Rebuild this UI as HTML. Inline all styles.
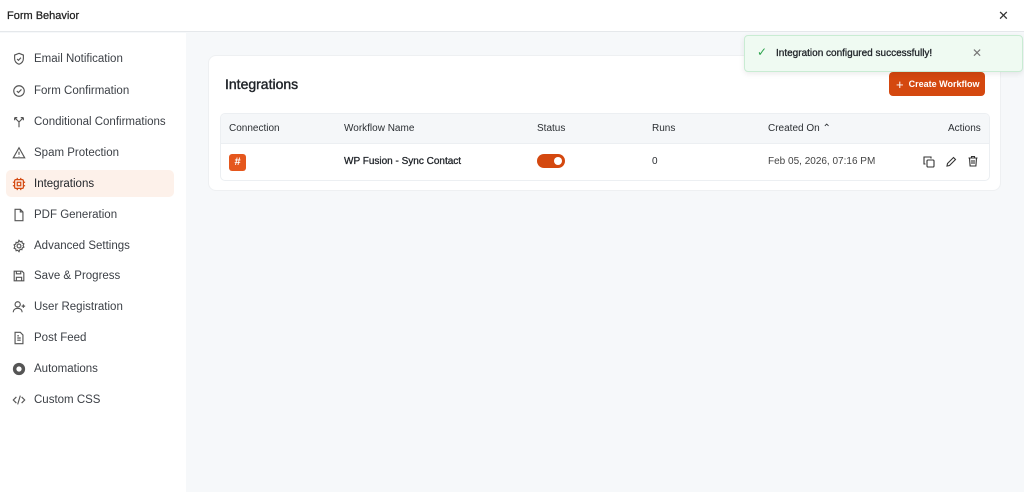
<!DOCTYPE html>
<html><head><style>
*{box-sizing:border-box;margin:0;padding:0}
body{width:1024px;height:492px;overflow:hidden;font-family:"Liberation Sans",sans-serif;background:#f6f8fa;position:relative;color:#1f2328}
.hdr{position:absolute;left:0;top:0;width:1024px;height:32px;background:#fff;border-bottom:1px solid #e5e8eb}
.hdr .t{position:absolute;left:7px;top:10px;font-size:11px;color:#222;-webkit-text-stroke:0.25px #222}
.hdr .x{position:absolute;left:998px;top:8px;font-size:13px;color:#333}
.side{position:absolute;left:0;top:33px;width:186px;height:459px;background:#fff}
.it{position:absolute;left:6px;width:168px;height:27px;border-radius:5px;font-size:11.5px;color:#3b3f45;display:flex;align-items:center;padding-left:6px}
.it svg{width:14px;height:14px;margin-right:8px;flex:none}
.it.a{background:#fdf1ea;color:#1f2328}
.card{position:absolute;left:208px;top:55px;width:793px;height:136px;background:#fff;border-radius:8px;border:1px solid #eef0f2}
.card h2{position:absolute;left:16px;top:20px;font-size:14px;font-weight:normal;-webkit-text-stroke:0.4px #1f2328;color:#1f2328}
.tbl{position:absolute;left:11px;top:57px;width:770px;height:68px;border:1px solid #eceff2;border-radius:5px;overflow:hidden}
.th{height:30px;background:#f5f7f9;border-bottom:1px solid #eceff2;position:relative;font-size:10px;color:#2b2f33}
.th span,.tr span{position:absolute;top:9px}
.tr{position:relative;height:37px;font-size:10px;color:#2b2f33}
.tr span{top:12px}
.btn{position:absolute;left:889px;top:72px;width:96px;height:24px;background:#d4480f;border-radius:4px;color:#fff;font-size:9px;font-weight:bold;display:flex;align-items:center;padding-left:7px}
.toast{position:absolute;left:744px;top:35px;width:279px;height:37px;background:#effaf2;border:1px solid #c9ecd3;border-radius:4px;box-shadow:0 2px 6px rgba(0,0,0,.08);font-size:10px;color:#1f2328}
</style></head><body>
<div class="hdr"><div class="t">Form Behavior</div><div class="x">✕</div></div>
<div class="side">
<div class="it" style="top:12px"><svg viewBox="0 0 16 16" fill="none" stroke="#555" stroke-width="1.3"><path d="M8 1.5l5 2v4c0 3-2.2 5.4-5 6.5-2.8-1.1-5-3.5-5-6.5v-4z"/><path d="M5.8 8l1.6 1.5 2.8-3"/></svg>Email Notification</div>
<div class="it" style="top:44px"><svg viewBox="0 0 16 16" fill="none" stroke="#555" stroke-width="1.3"><circle cx="8" cy="8" r="6"/><path d="M5.5 8l1.8 1.8 3.5-3.6"/></svg>Form Confirmation</div>
<div class="it" style="top:75px"><svg viewBox="0 0 16 16" fill="none" stroke="#555" stroke-width="1.3"><path d="M8 14V8L3 3M8 8l5-5M3 3v3M3 3h3M13 3v3M13 3h-3"/></svg>Conditional Confirmations</div>
<div class="it" style="top:106px"><svg viewBox="0 0 16 16" fill="none" stroke="#555" stroke-width="1.3"><path d="M8 2l6.5 11.5h-13z"/><path d="M8 6.5v3.5M8 11.5v.5"/></svg>Spam Protection</div>
<div class="it a" style="top:137px"><svg viewBox="0 0 16 16" fill="none" stroke="#d4480f" stroke-width="1.4"><rect x="3" y="3" width="10" height="10" rx="1.5"/><rect x="6" y="6" width="4" height="4"/><path d="M6 1v2M10 1v2M6 13v2M10 13v2M1 6h2M1 10h2M13 6h2M13 10h2"/></svg>Integrations</div>
<div class="it" style="top:168px"><svg viewBox="0 0 16 16" fill="none" stroke="#555" stroke-width="1.3"><path d="M3.5 1.5h6l3 3v10h-9z"/><path d="M9.5 1.5v3h3"/></svg>PDF Generation</div>
<div class="it" style="top:199px"><svg viewBox="0 0 16 16" fill="none" stroke="#555" stroke-width="1.3"><circle cx="8" cy="8" r="2.2"/><path d="M8 1.5l1.3 1.6 2-.5.4 2 1.9.9-.9 1.9.9 1.9-1.9.9-.4 2-2-.5L8 14.5l-1.3-1.6-2 .5-.4-2-1.9-.9.9-1.9-.9-1.9 1.9-.9.4-2 2 .5z"/></svg>Advanced Settings</div>
<div class="it" style="top:229px"><svg viewBox="0 0 16 16" fill="none" stroke="#555" stroke-width="1.3"><path d="M2.5 2.5h9l2 2v9h-11z"/><path d="M5 2.5v3h5v-3M5 13.5v-4h6v4"/></svg>Save &amp; Progress</div>
<div class="it" style="top:260px"><svg viewBox="0 0 16 16" fill="none" stroke="#555" stroke-width="1.3"><circle cx="6.5" cy="5" r="3"/><path d="M1.5 14c0-3 2.2-4.5 5-4.5s5 1.5 5 4.5M13 5v4M11 7h4"/></svg>User Registration</div>
<div class="it" style="top:291px"><svg viewBox="0 0 16 16" fill="none" stroke="#555" stroke-width="1.3"><path d="M3.5 1.5h6l3 3v10h-9z"/><path d="M6 8h4M6 10.5h4M6 5.5h2"/></svg>Post Feed</div>
<div class="it" style="top:322px"><svg viewBox="0 0 16 16"><circle cx="8" cy="8" r="7" fill="#555"/><circle cx="8" cy="8" r="3" fill="#fff"/></svg>Automations</div>
<div class="it" style="top:353px"><svg viewBox="0 0 16 16" fill="none" stroke="#555" stroke-width="1.3"><path d="M5 4.5L1.5 8 5 11.5M11 4.5L14.5 8 11 11.5M9.5 3l-3 10"/></svg>Custom CSS</div>
</div>
<div class="card"><h2>Integrations</h2>
<div class="tbl">
<div class="th"><span style="left:8px">Connection</span><span style="left:123px">Workflow Name</span><span style="left:316px">Status</span><span style="left:431px">Runs</span><span style="left:547px">Created On ⌃</span><span style="left:727px">Actions</span></div>
<div class="tr">
<div style="position:absolute;left:8px;top:10px;width:17px;height:17px;background:#e5571d;border-radius:3px;color:#fff;font-size:11px;font-weight:bold;text-align:center;line-height:17px">#</div>
<span style="left:123px;color:#1f2328;-webkit-text-stroke:0.3px #1f2328">WP Fusion - Sync Contact</span>
<div style="position:absolute;left:316px;top:10px;width:28px;height:14px;background:#d4480f;border-radius:7px"><div style="position:absolute;right:3px;top:3px;width:8px;height:8px;background:#fff;border-radius:50%"></div></div>
<span style="left:431px">0</span>
<span style="left:547px;color:#444">Feb 05, 2026, 07:16 PM</span>
<svg style="position:absolute;left:702px;top:12px" width="12" height="12" viewBox="0 0 12 12" fill="none" stroke="#333" stroke-width="1.1"><rect x="4" y="4" width="7" height="7" rx="1"/><path d="M8 2.5V1H1v7h1.5"/></svg>
<svg style="position:absolute;left:724px;top:12px" width="12" height="12" viewBox="0 0 12 12" fill="none" stroke="#333" stroke-width="1.1"><path d="M2 10l.5-2.5L8.5 1.5l2 2-6 6z"/></svg>
<svg style="position:absolute;left:746px;top:11px" width="12" height="12" viewBox="0 0 12 12" fill="none" stroke="#333" stroke-width="1.1"><path d="M1.5 3h9M4.5 3V1.5h3V3M2.5 3l.6 8h5.8l.6-8M5 5v4M7 5v4"/></svg>
</div></div></div>
<div class="btn"><span style="font-size:13px;font-weight:normal;margin-right:5px">+</span>Create Workflow</div>
<div class="toast"><span style="position:absolute;left:12px;top:9px;color:#2ea44f;font-size:12px">✓</span><span style="position:absolute;left:31px;top:12px;-webkit-text-stroke:0.3px #1f2328">Integration configured successfully!</span><span style="position:absolute;left:227px;top:10px;color:#777;font-size:12px">✕</span></div>
</body></html>
